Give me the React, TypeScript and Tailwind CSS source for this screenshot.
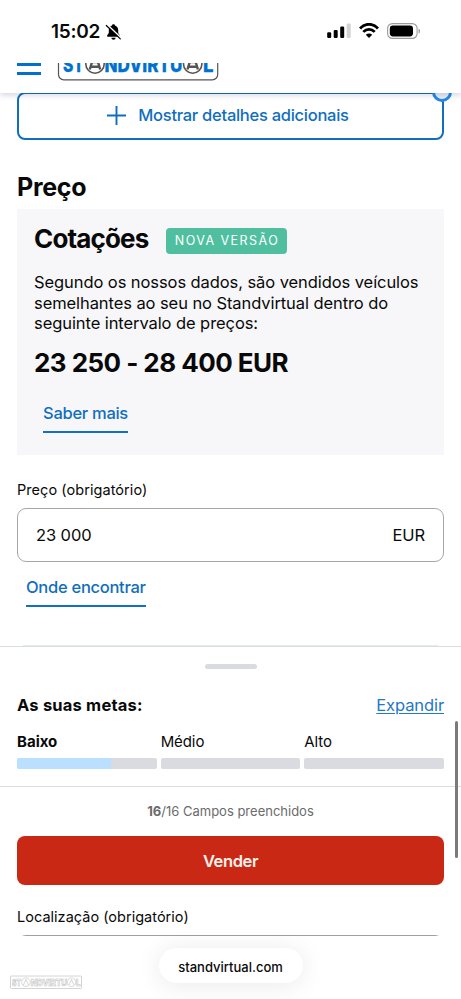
import type { ReactNode } from 'react';

interface Goal {
  label: string;
  progress: number;
  active?: boolean;
}

const goals: Goal[] = [
  { label: 'Baixo', progress: 67, active: true },
  { label: 'Médio', progress: 0 },
  { label: 'Alto', progress: 0 },
];

const StatusBar = () => (
  <div className="flex h-[63px] shrink-0 items-start justify-between pl-[51px] pr-[40px] pt-[20px]">
    <div className="flex items-center">
      <span className="w-[50px] whitespace-nowrap text-[19px] font-semibold leading-[23px] tracking-[-0.25px]">15:02</span>
      <svg className="ml-[4px]" width="17" height="18" viewBox="0 0 17 18">
        <path d="M8.500 1.200c.8 0 1.400.5 1.500 1.200 2 .7 3.200 2.300 3.200 4.500v2.600c0 1.400 1.800 2.300 1.800 3.500 0 .5-.3.8-.9.800H2.900c-.6 0-.9-.3-.9-.8 0-1.200 1.800-2.100 1.800-3.500V6.900c0-2.200 1.200-3.800 3.200-4.500.1-.7.700-1.200 1.500-1.200z" fill="#000" />
        <path d="M6.300 14.700h4.400c-.2 1.200-1.100 2-2.200 2s-2-.8-2.200-2z" fill="#000" />
        <path d="M2.600 2L16 14.800" stroke="#fff" strokeWidth="1.600" />
        <path d="M1.300 2.500L15.300 15.900" stroke="#000" strokeWidth="1.200" strokeLinecap="round" />
      </svg>
    </div>
    <div className="flex items-center pt-[3px]">
      <svg width="24" height="16" viewBox="0 0 24 16">
        <rect x="0.200" y="9.200" width="4" height="5.800" rx="1.200" />
        <rect x="6.700" y="6.900" width="4" height="8.100" rx="1.200" />
        <rect x="13.200" y="3.600" width="4" height="11.400" rx="1.200" />
        <rect x="19.700" y="0.600" width="4" height="14.400" rx="1.200" fill="#d2d2d2" />
      </svg>
      <svg className="ml-[8px]" width="20" height="16" viewBox="0 0 20 16">
        <path d="M1 5.500C6-.1 14-.1 19 5.500" fill="none" stroke="#000" strokeWidth="2.900" />
        <path d="M4.300 8.900c3.300-3.500 8.100-3.500 11.400 0" fill="none" stroke="#000" strokeWidth="2.800" />
        <path d="M10 14.900L6.800 11.700c1.900-1.700 4.500-1.700 6.400 0z" />
      </svg>
      <svg className="ml-[8px]" width="34" height="16" viewBox="0 0 34 16">
        <rect x="0.600" y="0.600" width="29.500" height="14.800" rx="4.800" fill="none" stroke="#9c9c9c" strokeWidth="1.100" />
        <rect x="2.800" y="2.600" width="23.200" height="10.800" rx="3.100" />
        <path d="M31.600 5.400c1.700.8 1.700 4.400 0 5.200z" fill="#8c8c8c" />
      </svg>
    </div>
  </div>
);

const Header = () => (
  <header className="z-10 flex h-[30px] shrink-0 bg-white pl-[17px] shadow-[0_2px_6px_rgba(30,40,110,0.2)] [clip-path:inset(0_0_-12px_0)]">
    <svg width="24" height="13" viewBox="0 0 24 13">
      <path d="M0 1.500h24M0 10.500h24" stroke="#0071ce" strokeWidth="2.800" />
    </svg>
    <svg className="ml-[16px]" width="164" height="19" viewBox="57 63 164 19">
      <path d="M58.500 58V74.500a5.300 5.300 0 0 0 5.300 5.300H212.400a5.300 5.300 0 0 0 5.300-5.300V58" fill="none" stroke="#555" strokeWidth="1.200" />
      <g fill="#0071ce" stroke="#0071ce" strokeWidth="0.300" fontFamily="Inter, sans-serif" fontWeight="800" fontSize="20">
        <text x="63" y="71.800" textLength="21" lengthAdjust="spacingAndGlyphs">ST</text>
        <text x="104.500" y="71.800" textLength="78" lengthAdjust="spacingAndGlyphs">NDVIRTU</text>
        <text x="203" y="71.800" textLength="10.500" lengthAdjust="spacingAndGlyphs">L</text>
      </g>
      {[95, 192.700].map((cx) => (
        <g key={cx} fill="none" stroke="#555">
          <circle cx={cx} cy="64" r="9.200" strokeWidth="1.600" />
          <path d={`M${cx - 5.200} 69.500L${cx - 3} 62h6L${cx + 5.200} 69.500M${cx - 4.500} 66.800h9`} strokeWidth="2.400" />
        </g>
      ))}
    </svg>
  </header>
);

const UnderlinedLink = ({ children }: { children: ReactNode }) => (
  <a className="inline-block h-[31px] border-b-2 border-[#0f70c4] text-[16.500px] font-medium leading-[22px] tracking-[-0.28px] text-[#0f6ebe]">
    {children}
  </a>
);

const PriceCard = () => (
  <section className="h-[246px] bg-[#f7f7fa] pl-[17px] pt-[14px]">
    <div className="flex items-center">
      <h2 className="w-[114px] whitespace-nowrap text-[26px] font-bold leading-[32px] tracking-[-0.85px]">Cotações</h2>
      <span className="ml-[18px] mt-[3px] flex h-[26px] w-[121px] items-center justify-center rounded bg-[#4fbf9f] pl-px pt-px text-[12.500px] tracking-[1.450px] text-white">
        NOVA VERSÃO
      </span>
    </div>
    <p className="mt-[17px] whitespace-nowrap text-[16.500px] leading-[20.500px] tracking-[-0.080px]">
      Segundo os nossos dados, são vendidos veículos
      <br />
      semelhantes ao seu no Standvirtual dentro do
      <br />
      seguinte intervalo de preços:
    </p>
    <p className="mt-[13px] text-[26px] font-bold leading-[32px] tracking-[-0.550px]">23 250 - 28 400 EUR</p>
    <div className="pl-[9px] pt-[22px]">
      <UnderlinedLink>Saber mais</UnderlinedLink>
    </div>
  </section>
);

const GoalBar = ({ label, progress, active }: Goal) => (
  <div className="flex-1">
    <p className={active ? 'text-[15px] font-bold leading-[20px]' : 'text-[15px] leading-[20px] tracking-[-0.1px]'}>{label}</p>
    <div className="mt-[6px] h-[11px] overflow-hidden rounded-[2px] bg-[#d9dbe0]">
      <div className="h-full bg-[#bbdfff]" style={{ width: `${progress}%` }} />
    </div>
  </div>
);

const GoalsPanel = () => (
  <div className="h-[141px] shrink-0 border-y border-[#dcdde0] px-[17px] pt-[17px]">
    <div className="mx-auto h-[5px] w-[52px] rounded-full bg-[#d9dbe0]" />
    <div className="mt-[25px] flex items-center justify-between">
      <h3 className="text-[16.500px] font-bold leading-[22px] tracking-[0.2px]">As suas metas:</h3>
      <a className="text-[16.500px] leading-[22px] tracking-[-0.1px] text-[#2477c6] underline underline-offset-2">Expandir</a>
    </div>
    <div className="mt-[16px] flex gap-[4px]">
      {goals.map((goal) => (
        <GoalBar key={goal.label} {...goal} />
      ))}
    </div>
  </div>
);

const App = () => (
  <div className="relative flex h-[999px] w-[461px] flex-col overflow-hidden bg-white font-['Inter',sans-serif] text-[#090909]">
    <StatusBar />
    <Header />
    <main className="h-[553px] shrink-0 px-[17px]">
      <div className="relative -mt-px">
        <button className="flex h-[48px] w-full items-center justify-center rounded-lg border-2 border-[#0f6ebe] pb-[2px] pr-[5px] text-[16.500px] font-medium tracking-[-0.270px] text-[#0f6ebe]">
          <svg className="mr-[12px]" width="19" height="19" viewBox="0 0 19 19">
            <path d="M9.500 0v19M0 9.500h19" stroke="#0f6ebe" strokeWidth="1.900" />
          </svg>
          Mostrar detalhes adicionais
        </button>
        <div className="absolute right-[-8px] top-[-10px] size-[20px] rounded-full border-[3px] border-[#2489e4] bg-[#e7eef9]" />
      </div>
      <h1 className="mt-[31px] text-[25px] font-bold leading-[32px] tracking-[-0.3px]">Preço</h1>
      <div className="mt-[6px]">
        <PriceCard />
      </div>
      <label className="mt-[25px] block text-[14.500px] leading-[20px] tracking-[0.060px]">Preço (obrigatório)</label>
      <div className="mt-[8px] flex h-[54px] items-center justify-between rounded-[9px] border border-[#a6a6a6] px-[18px] text-[16.500px] tracking-[-0.1px]">
        <span>23 000</span>
        <span>EUR</span>
      </div>
      <div className="pl-[9px] pt-[13px]">
        <UnderlinedLink>Onde encontrar</UnderlinedLink>
      </div>
      <div className="mx-[6px] mt-[38px] h-px bg-[#dcefe9]" />
    </main>
    <GoalsPanel />
    <div className="h-[149px] shrink-0 overflow-hidden px-[17px]">
      <p className="mt-[15px] text-center text-[13px] leading-[18px] text-[#6b6b6b]">
        <b>16</b>/16 Campos preenchidos
      </p>
      <button className="mt-[16px] h-[49px] w-full rounded-lg bg-[#c82814] pt-[2px] text-[16.500px] font-semibold tracking-[-0.4px] text-[#fff1ec]">
        Vender
      </button>
      <label className="mt-[22px] block text-[14.500px] leading-[20px] tracking-[0.020px]">Localização (obrigatório)</label>
      <div className="mt-[8px] h-[54px] rounded-[9px] border border-[#a0a0a0]" />
    </div>
    <footer className="flex flex-1 justify-center pt-[12px]">
      <div className="flex h-[35px] w-[144px] items-center justify-center rounded-full bg-white pt-[4px] text-[13px] font-medium shadow-[0_2px_26px_rgba(0,0,0,0.09)]">
        standvirtual.com
      </div>
    </footer>
    <svg className="absolute bottom-[8px] left-[9px]" width="75" height="17" viewBox="0 0 75 17">
      <rect x="1.500" y="2" width="71" height="12.500" rx="1" fill="#fff" stroke="#c9c9c9" strokeWidth="0.800" />
      <g fill="#fff" stroke="#bdbdbd" strokeWidth="0.600" fontFamily="Inter, sans-serif" fontWeight="800" fontSize="9">
        <text x="3" y="11.600" textLength="9" lengthAdjust="spacingAndGlyphs">ST</text>
        <text x="22" y="11.600" textLength="36" lengthAdjust="spacingAndGlyphs">NDVIRTU</text>
        <text x="67" y="11.600" textLength="4.500" lengthAdjust="spacingAndGlyphs">L</text>
        <circle cx="17" cy="8.200" r="4.300" />
        <circle cx="62.500" cy="8.200" r="4.300" />
        <path d="M14.500 11L17 5.500 19.500 11M60 11l2.500-5.500L65 11" fill="none" />
      </g>
    </svg>
    <div className="absolute right-[3px] top-[721px] h-[137px] w-[3px] rounded-full bg-[#7b7b7b]" />
  </div>
);

export default App;
